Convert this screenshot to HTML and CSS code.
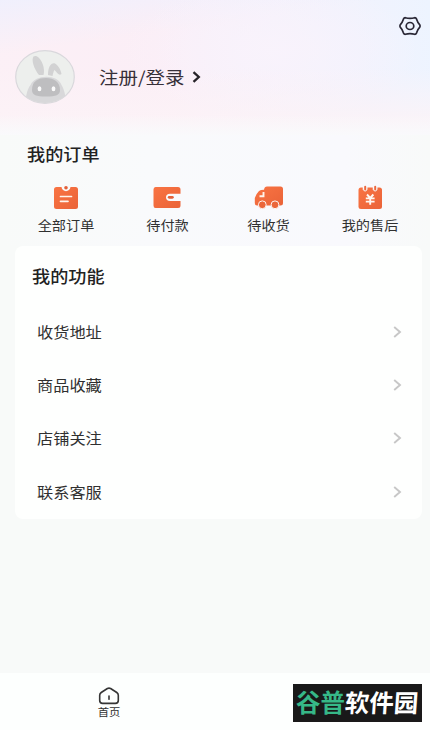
FILE: index.html
```html
<!DOCTYPE html>
<html lang="zh-CN">
<head>
<meta charset="utf-8">
<meta name="viewport" content="width=device-width, initial-scale=1">
<title>我的</title>
<link rel="stylesheet" href="styles.css">
</head>
<body>
<div class="app">
  <header class="hero">
    <div class="toolbar">
      <svg class="settings" width="24" height="22" viewBox="0 0 24 22" fill="none" stroke="#292735" stroke-width="1.7" stroke-linejoin="round">
        <path d="M7.3 2.7Q12 4.1 16.7 2.7Q18 2.8 18.6 4.2Q19.6 7.5 21.8 9.8Q22.4 11 21.8 12.2Q19.6 14.5 18.6 17.8Q18 19.2 16.7 19.3Q12 17.9 7.3 19.3Q6 19.2 5.4 17.8Q4.4 14.5 2.2 12.2Q1.6 11 2.2 9.8Q4.4 7.5 5.4 4.2Q6 2.8 7.3 2.7Z"/>
        <ellipse cx="12" cy="11" rx="3.8" ry="3.5"/>
      </svg>
    </div>
    <div class="profile">
      <svg class="avatar" width="60" height="54" viewBox="0 0 60 54">
        <defs><clipPath id="face"><ellipse cx="30" cy="27" rx="29" ry="26"/></clipPath></defs>
        <ellipse cx="30" cy="27" rx="29.3" ry="26.3" fill="#edefed" stroke="#d9d8dc" stroke-width="1.2"/>
        <g clip-path="url(#face)">
          <path d="M24 25C19 19 16 10 18.500 6.500C23 3 31 15 28.500 25Z" fill="#d2d2d3"/>
          <path d="M33 25C33 17 36 12.500 40 13.500C43 15 46 20 46.500 24C44 26 42.500 23 39.500 20C38.500 21 38 24 37.500 26Z" fill="#d2d2d3"/>
          <path d="M10 54C11 44 13 38 15.500 35C20 24 43 24 46.500 35C49 39 51 46 51 54Z" fill="#d8d8da"/>
          <path d="M17 40C17 31 23 28 31 28C39 28 45 32 45 40C45 45 41 46.500 31 46.500C21 46.500 17 45 17 40Z" fill="#bebec0"/>
          <ellipse cx="24.500" cy="38.800" rx="1.900" ry="2.500" fill="#fafafa"/>
          <ellipse cx="38.500" cy="38.800" rx="1.900" ry="2.500" fill="#fafafa"/>
        </g>
      </svg>
      <a class="login"><span class="wide">注册/登录</span></a>
      <svg class="login-arrow" width="9" height="12" viewBox="0 0 9 12" fill="none" stroke="#272329" stroke-width="2.300"><path d="M1.500 1.200L6.800 6L1.500 10.800"/></svg>
    </div>
  </header>

  <section class="orders">
    <h2 class="title"><span class="wide">我的订单</span></h2>
    <div class="order-grid">
      <div class="order">
        <svg width="30" height="24" viewBox="0 0 30 24">
          <path d="M5.500 2H10.500C11 7.500 19 7.500 19.500 2H24.500Q27 2 27 4.500V21.500Q27 24 24.500 24H5.500Q3 24 3 21.500V4.500Q3 2 5.500 2Z" fill="url(#orange)"/>
          <circle cx="15" cy="2.700" r="1.800" fill="#e2603a"/>
          <path d="M9.500 11.500H20.500M9.500 16.300H17" stroke="#fff4ec" stroke-width="1.700" stroke-linecap="round"/>
          <defs><linearGradient id="orange" x1="0" y1="0" x2="1" y2="1"><stop stop-color="#f97443"/><stop offset="1" stop-color="#ea6338"/></linearGradient></defs>
        </svg>
        <span class="order-name wide">全部订单</span>
      </div>
      <div class="order">
        <svg width="30" height="24" viewBox="0 0 30 24">
          <path d="M3.500 2H26Q28.500 2 28.500 4.500V8.700H18Q14 8.700 14 12.300Q14 16 18 16H28.500V20.500Q28.500 23 26 23H3.500Q1.500 23 1.500 20.500V4.500Q1.500 2 3.500 2Z" fill="url(#orange)"/>
          <rect x="15.800" y="10.900" width="6" height="2.800" rx="1.400" fill="#e2603a"/>
        </svg>
        <span class="order-name wide">待付款</span>
      </div>
      <div class="order">
        <svg width="30" height="24" viewBox="0 0 30 24">
          <path d="M13 1.500H26.500Q29 1.500 29 4V18Q29 20.500 26.500 20.500H3Q.8 20.500.8 18V13Q2 9 5 6Q6.500 4.800 10 4.800Q10.500 1.500 13 1.500Z" fill="url(#orange)"/>
          <path d="M9.500 7V11.300H5.500" fill="none" stroke="#fff3ea" stroke-width="1.900"/>
          <g fill="#eb663a" stroke="#fdf4f1" stroke-width="1"><circle cx="8.300" cy="19.800" r="3.900"/><circle cx="21" cy="19.800" r="3.900"/></g>
        </svg>
        <span class="order-name wide">待收货</span>
      </div>
      <div class="order">
        <svg width="30" height="24" viewBox="0 0 30 24">
          <rect x="3.500" y="2.500" width="23.500" height="21.500" rx="2.500" fill="url(#orange)"/>
          <path d="M8 1V4.500Q10.200 8 12.200 4.500V1M18 1V4.500Q20.200 8 22.200 4.500V1" fill="#f9f9fc" stroke="#f9f9fc" stroke-width=".5"/>
          <path d="M10.200 1.800V4.500M20.200 1.800V4.500" stroke="#eb683d" stroke-width="2" stroke-linecap="round"/>
          <path d="M12 9.500L15.200 13L18.400 9.500M15.200 13V19.800M10.800 13.400H19.600M10.800 16.600H19.600" fill="none" stroke="#fff7f1" stroke-width="1.900"/>
        </svg>
        <span class="order-name wide">我的售后</span>
      </div>
    </div>
  </section>

  <section class="functions">
    <h2 class="title"><span class="wide">我的功能</span></h2>
    <ul class="menu">
      <li><span class="wide">收货地址</span><svg class="chevron" viewBox="0 0 9 12"><path d="M1.200 1L7 6L1.200 11"/></svg></li>
      <li><span class="wide">商品收藏</span><svg class="chevron" viewBox="0 0 9 12"><path d="M1.200 1L7 6L1.200 11"/></svg></li>
      <li><span class="wide">店铺关注</span><svg class="chevron" viewBox="0 0 9 12"><path d="M1.200 1L7 6L1.200 11"/></svg></li>
      <li><span class="wide">联系客服</span><svg class="chevron" viewBox="0 0 9 12"><path d="M1.200 1L7 6L1.200 11"/></svg></li>
    </ul>
  </section>

  <nav class="tabs">
    <div class="tab">
      <svg width="22" height="18" viewBox="0 0 22 18" fill="none" stroke="#353535" stroke-width="1.600" stroke-linecap="round" stroke-linejoin="round">
        <path d="M3.200 5.500L9.400 1.500Q11 .7 12.600 1.500L18.800 5.500Q20.300 6.500 20.300 8.200V13.500Q20.300 16.400 17.400 16.400H4.600Q1.700 16.400 1.700 13.500V8.200Q1.700 6.500 3.200 5.500Z"/>
        <path d="M11 9V12.200"/>
      </svg>
      <span class="tab-name wide">首页</span>
    </div>
    <div class="brand"><span class="brand-green">谷普</span><span class="brand-white">软件园</span></div>
  </nav>
</div>
</body>
</html>
```
FILE: styles.css
```css
* { box-sizing: border-box; }

body {
  margin: 0;
  background: #fff;
  font-family: "Noto Sans CJK SC", sans-serif;
  color: #303030;
}

.app {
  display: flex;
  flex-direction: column;
  height: 730px;
  overflow: hidden;
  background: #f8faf9;
}

svg { display: block; flex: none; }

/* Labels are drawn slightly wider than the font's square glyphs. */
.wide {
  display: inline-block;
  transform: scaleX(1.09);
  transform-origin: left center;
  white-space: nowrap;
}

.hero {
  height: 135px;
  flex: none;
  background:
    linear-gradient(to bottom, rgba(249, 250, 252, 0) 85%, rgba(249, 250, 252, .95) 100%),
    linear-gradient(to bottom, rgba(252, 243, 247, 0) 50%, rgba(252, 243, 247, .85) 90%),
    radial-gradient(ellipse 150px 70px at 270px 50px, rgba(249, 243, 252, .9), rgba(249, 243, 252, 0)),
    linear-gradient(172deg, rgba(238, 240, 254, .85) 0%, rgba(240, 240, 253, 0) 28%),
    linear-gradient(80deg, #fcf0f6 0%, #fbeef6 38%, #f5f1fb 65%, #edf4ff 100%);
}

.toolbar {
  display: flex;
  justify-content: flex-end;
  padding: 15px 8px 0 0;
  height: 50px;
}

.profile {
  display: flex;
  align-items: center;
  height: 54px;
  padding-left: 15px;
}

.login {
  width: 93px;
  margin-left: 24px;
  font-size: 17px;
  line-height: 24px;
  color: #373039;
}
.login .wide { transform: scaleX(1.145); }
.login-arrow { margin-top: -1px; }

.orders {
  flex: none;
  height: 111px;
  background: linear-gradient(90deg, #f8faf9, #f9fafc 35%, #f9f9fd 80%, #f8faf9);
}

.title {
  margin: 0;
  font-size: 16.500px;
  line-height: 24px;
  font-weight: 500;
  color: #222;
}

.title .wide { transform: scaleX(1.1); }
.orders .title { padding: 7px 0 0 27px; }

.order-grid {
  display: grid;
  grid-template-columns: repeat(4, 101.500px);
  padding: 19px 0 0 15px;
}

.order {
  display: flex;
  flex-direction: column;
  align-items: center;
}

.order-name {
  margin-top: 7px;
  font-size: 13px;
  line-height: 18px;
  color: #303030;
  transform-origin: center;
}

.functions {
  flex: none;
  height: 273px;
  margin: 0 8px 0 15px;
  padding: 18px 20px 0 17px;
  background: #fefffe;
  border-radius: 8px;
}

.menu {
  margin: 17px 0 0;
  padding: 0 0 0 5px;
  list-style: none;
}

.menu li {
  display: flex;
  align-items: center;
  justify-content: space-between;
  height: 53.400px;
  font-size: 15px;
  line-height: 20px;
}

.menu .wide { transform: scaleX(1.08); }

.chevron {
  width: 9px;
  height: 12px;
  fill: none;
  stroke: #c7c7c7;
  stroke-width: 1.900;
}

.tabs {
  display: flex;
  justify-content: space-between;
  align-items: flex-start;
  margin-top: auto;
  height: 57px;
  padding: 11px 8px 0 0;
  background: #fdfffe;
}

.tab {
  display: flex;
  flex-direction: column;
  align-items: center;
  width: 217px;
  padding-top: 3px;
}

.tab-name {
  font-size: 10px;
  line-height: 14px;
  transform: scaleX(1.130);
  transform-origin: center;
}

.brand {
  display: flex;
  align-items: center;
  width: 129px;
  height: 38px;
  padding: 0 0 3px 3px;
  background: #191919;
  color: #fff;
  font-size: 24.500px;
  line-height: 35px;
  font-weight: 700;
}
.brand-green { color: #36b888; }
.brand-white { transform: skewX(-4deg); }
```
